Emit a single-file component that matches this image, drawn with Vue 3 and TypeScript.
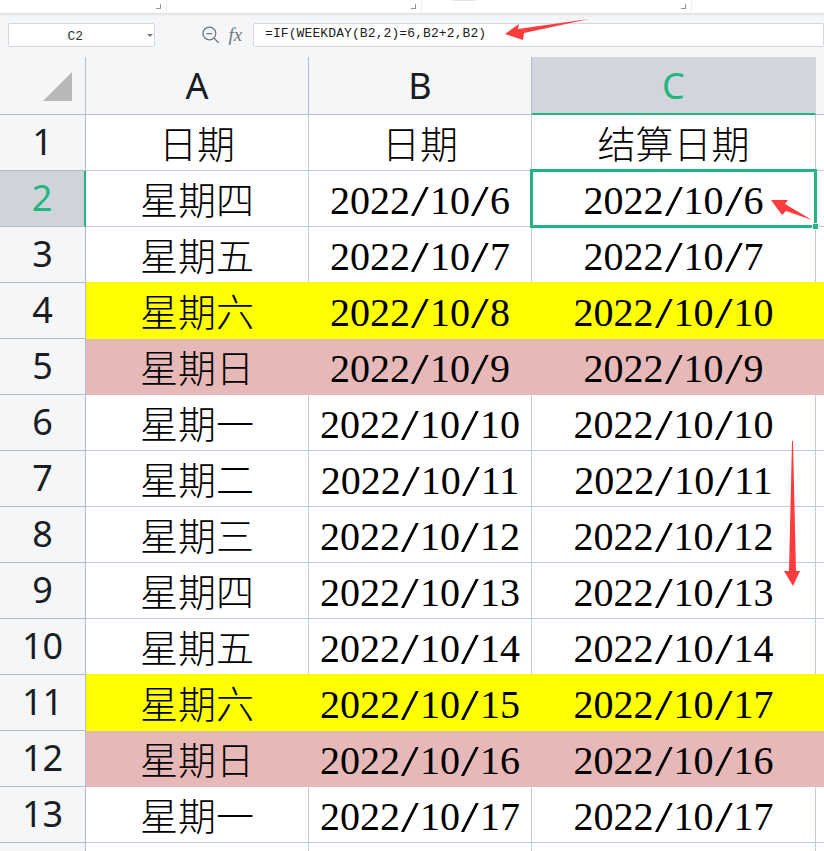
<script setup lang="ts">
interface Row {
  n: number
  a: string
  b: string
  c: string
  tone?: 'yellow' | 'pink'
}

const rows: Row[] = [
  { n: 2, a: '星期四', b: '2022/10/6', c: '2022/10/6' },
  { n: 3, a: '星期五', b: '2022/10/7', c: '2022/10/7' },
  { n: 4, a: '星期六', b: '2022/10/8', c: '2022/10/10', tone: 'yellow' },
  { n: 5, a: '星期日', b: '2022/10/9', c: '2022/10/9', tone: 'pink' },
  { n: 6, a: '星期一', b: '2022/10/10', c: '2022/10/10' },
  { n: 7, a: '星期二', b: '2022/10/11', c: '2022/10/11' },
  { n: 8, a: '星期三', b: '2022/10/12', c: '2022/10/12' },
  { n: 9, a: '星期四', b: '2022/10/13', c: '2022/10/13' },
  { n: 10, a: '星期五', b: '2022/10/14', c: '2022/10/14' },
  { n: 11, a: '星期六', b: '2022/10/15', c: '2022/10/17', tone: 'yellow' },
  { n: 12, a: '星期日', b: '2022/10/16', c: '2022/10/16', tone: 'pink' },
  { n: 13, a: '星期一', b: '2022/10/17', c: '2022/10/17' },
]

const parts = (d: string): string[] => d.split(/(\/)/)
</script>

<template>
  <div class="app">
    <div class="ribbon">
      <div class="group g1"><i class="corner"></i></div>
      <div class="group g2"><i class="corner"></i></div>
      <div class="group g3"><i class="tab"></i><i class="corner"></i></div>
    </div>

    <div class="formula">
      <div class="namebox">
        <span class="nametext">C2</span>
        <i class="caret"></i>
      </div>
      <svg class="zoomicon" width="18" height="18" viewBox="0 0 18 18" fill="none" stroke="#6f7680" stroke-width="1.3">
        <circle cx="7.5" cy="7.5" r="6.5" />
        <path d="M4.5 7.5h6M12.2 12.2l4.6 4.6" />
      </svg>
      <span class="fx">fx</span>
      <div class="input">=IF(WEEKDAY(B2,2)=6,B2+2,B2)</div>
    </div>

    <div class="sheet">
      <div class="corner-cell"><i class="tri"></i></div>
      <div class="colhead">A</div>
      <div class="colhead">B</div>
      <div class="colhead active">C</div>
      <div class="colhead last"></div>

      <div class="rowhead">1</div>
      <div class="cell cjk">日期</div>
      <div class="cell cjk">日期</div>
      <div class="cell cjk">结算日期</div>
      <div class="cell last"></div>

      <template v-for="r in rows" :key="r.n">
        <div class="rowhead" :class="{ active: r.n === 2 }">{{ r.n }}</div>
        <div class="cell cjk" :class="r.tone">{{ r.a }}</div>
        <div class="cell date" :class="r.tone">
          <template v-for="(p, i) in parts(r.b)" :key="i">
            <span v-if="p === '/'" class="slash">/</span>
            <template v-else>{{ p }}</template>
          </template>
        </div>
        <div class="cell date" :class="[r.tone, { selected: r.n === 2 }]">
          <template v-for="(p, i) in parts(r.c)" :key="i">
            <span v-if="p === '/'" class="slash">/</span>
            <template v-else>{{ p }}</template>
          </template>
          <template v-if="r.n === 2">
            <i class="selbox"></i>
            <i class="handle"></i>
          </template>
        </div>
        <div class="cell last" :class="r.tone"></div>
      </template>

      <div class="rowhead"></div>
      <div class="cell"></div>
      <div class="cell"></div>
      <div class="cell"></div>
      <div class="cell last"></div>
    </div>

    <svg class="marks" width="824" height="851" viewBox="0 0 824 851">
      <polygon points="505,34 519,24 518,29 589,19 524,33 523,40" fill="#ff3b3b" />
      <polygon points="771,200 788,200 785,204 812,220 786,211 782,215" fill="#ff3b3b" />
      <polygon points="792,441 793,441 796,571 800,571 793,586 784,571 789,571" fill="#ff3b3b" />
    </svg>
  </div>
</template>

<style>
html,
body {
  margin: 0;
  background: #fff;
}
</style>

<style scoped>
.app {
  position: relative;
  width: 824px;
  height: 851px;
  overflow: hidden;
  background: #fff;
  color: #111;
}

.ribbon {
  display: flex;
  height: 13px;
  background: #fff;
  box-shadow: 0 1px 3px rgba(0, 0, 0, 0.14);
  position: relative;
}
.group {
  position: relative;
  height: 13px;
  border-right: 1px solid #eceef1;
  box-sizing: border-box;
}
.g1 { width: 167px; }
.g2 { width: 255px; }
.g3 { width: 270px; }
.corner {
  position: absolute;
  top: 4px;
  right: 5px;
  width: 4px;
  height: 4px;
  border-right: 1px solid #8d949e;
  border-bottom: 1px solid #8d949e;
}
.tab {
  position: absolute;
  left: 31px;
  top: 0;
  width: 22px;
  height: 1px;
  background: #e2e4e8;
}

.formula {
  display: flex;
  align-items: center;
  height: 44px;
  padding-left: 8px;
  box-sizing: border-box;
  background: #f5f6f8;
}
.namebox {
  position: relative;
  width: 149px;
  height: 24px;
  box-sizing: border-box;
  background: #fff;
  border: 1px solid #d3d7e0;
  border-radius: 2px;
  text-align: center;
  font: 13px/25px "Liberation Mono", monospace;
  color: #333;
}
.nametext {
  display: inline-block;
  margin-right: 12px;
}
.caret {
  position: absolute;
  right: 1px;
  top: 10px;
  width: 0;
  height: 0;
  border-left: 3px solid transparent;
  border-right: 3px solid transparent;
  border-top: 3px solid #777;
}
.zoomicon {
  margin-left: 46px;
  transform: translateX(1px);
}
.fx {
  margin-left: 10px;
  width: 24px;
  font: italic 19px "Liberation Serif", serif;
  color: #6f7680;
}
.input {
  width: 580px;
  height: 24px;
  box-sizing: border-box;
  margin-left: 1px;
  padding-left: 11px;
  background: #fff;
  border: 1px solid #d3d7e0;
  border-radius: 2px;
  font: 13px/20px "Liberation Mono", monospace;
  letter-spacing: 0.1px;
  color: #222;
}

.sheet {
  display: grid;
  grid-template-columns: 86px 223px 223px 284px 8px;
  grid-template-rows: 58px repeat(14, 56px);
}

.corner-cell,
.colhead,
.rowhead {
  box-sizing: border-box;
  background: #f5f6f8;
  border-right: 1px solid #b3bbd1;
  border-bottom: 1px solid #b3bbd1;
  font-family: "Noto Sans", "Open Sans", sans-serif;
  font-size: 36px;
  color: #1a1d24;
  display: flex;
  align-items: center;
  justify-content: center;
}
.corner-cell {
  position: relative;
}
.tri {
  position: absolute;
  left: 43px;
  top: 15px;
  width: 29px;
  height: 29px;
  background: #b8b8b8;
  clip-path: polygon(100% 0, 100% 100%, 0 100%);
}
.colhead.active {
  background: #d2d5dd;
  color: #21b57f;
  border-right-color: #d2d5dd;
  border-bottom: 2px solid #21b57f;
}
.colhead.last {
  border-right: 0;
}
.rowhead {
  padding-bottom: 3px;
}
.rowhead.active {
  background: #cfd3da;
  color: #21b57f;
  border-right: 2px solid #21b57f;
}

.cell {
  box-sizing: border-box;
  border-right: 1px solid #c3c9dc;
  border-bottom: 1px solid #c3c9dc;
  display: flex;
  align-items: center;
  justify-content: center;
  white-space: pre;
  color: #000;
}
.cell.last {
  border-right: 0;
}
.cjk {
  font-family: "Noto Sans CJK SC", sans-serif;
  font-size: 38px;
  font-weight: 300;
  padding-bottom: 3px;
}
.date {
  font-family: "Liberation Serif", serif;
  font-size: 40px;
  padding-top: 3px;
}
.slash {
  display: inline-block;
  width: 20px;
  text-align: center;
  font-weight: 400;
  transform: scale(1.6, 1.12);
}
.yellow {
  background: #ffff00;
  border-color: #ffff00;
  box-shadow: 0 -1px 0 #ffff00;
}
.pink {
  background: #e6b8b7;
  border-color: #e6b8b7;
}

.selected {
  position: relative;
}
.selbox {
  position: absolute;
  left: -2px;
  top: -2px;
  right: -2px;
  bottom: -2px;
  border: 3px solid #21b57f;
}
.handle {
  position: absolute;
  right: -3px;
  bottom: -3px;
  width: 5px;
  height: 5px;
  background: #21b57f;
  outline: 1px solid #fff;
}

.marks {
  position: absolute;
  left: 0;
  top: 0;
  pointer-events: none;
}
</style>
